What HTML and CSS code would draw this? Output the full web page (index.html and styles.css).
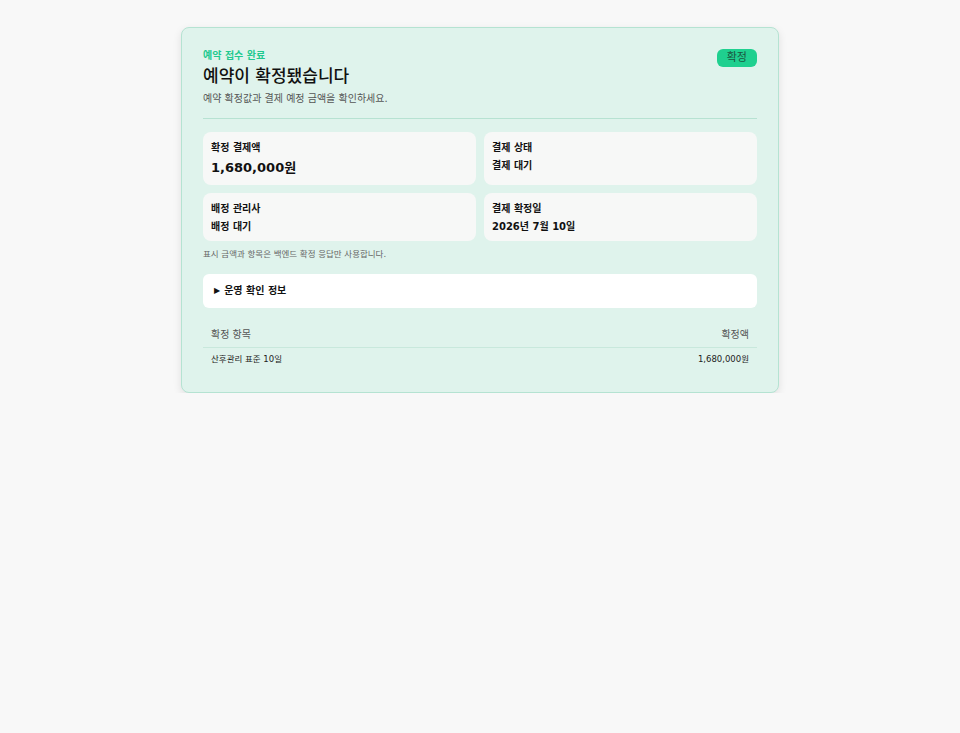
FILE: index.html
```html
<!DOCTYPE html>
<html lang="ko">
<head>
<meta charset="utf-8">
<link rel="stylesheet" href="styles.css">
</head>
<body>
<main class="card">
  <header class="head">
    <div class="head-text">
      <p class="eyebrow">예약 접수 완료</p>
      <h1 class="title">예약이 확정됐습니다</h1>
      <p class="sub">예약 확정값과 결제 예정 금액을 확인하세요.</p>
    </div>
    <span class="badge">확정</span>
  </header>
  <hr class="divider">
  <section class="grid">
    <div class="tile">
      <div class="label">확정 결제액</div>
      <div class="value big">1,680,000원</div>
    </div>
    <div class="tile">
      <div class="label">결제 상태</div>
      <div class="value">결제 대기</div>
    </div>
    <div class="tile">
      <div class="label">배정 관리사</div>
      <div class="value">배정 대기</div>
    </div>
    <div class="tile">
      <div class="label">결제 확정일</div>
      <div class="value">2026년 7월 10일</div>
    </div>
  </section>
  <p class="note">표시 금액과 항목은 백엔드 확정 응답만 사용합니다.</p>
  <details class="details">
    <summary class="summary">운영 확인 정보</summary>
  </details>
  <table class="table">
    <thead>
      <tr><th class="left">확정 항목</th><th class="right">확정액</th></tr>
    </thead>
    <tbody>
      <tr><td class="left">산후관리 표준 10일</td><td class="right">1,680,000원</td></tr>
    </tbody>
  </table>
</main>
</body>
</html>
```

FILE: styles.css
```css
* { box-sizing: border-box; }
html, body { margin: 0; padding: 0; }
body {
  background: #f8f8f8;
  font-family: "DejaVu Sans", "Noto Sans CJK KR", sans-serif;
  color: #111;
  padding-top: 27px;
}
.card {
  width: 598px;
  margin: 0 auto;
  background: #dff3ec;
  border: 1px solid #b5e3d2;
  border-radius: 8px;
  padding: 21px 21px 19px;
  box-shadow: 0 3px 8px rgba(0,0,0,0.10);
}
.head {
  display: flex;
  justify-content: space-between;
  align-items: flex-start;
}
.eyebrow {
  margin: 0;
  font-size: 10px;
  font-weight: bold;
  color: #20c98f;
  line-height: 14px;
}
.title {
  margin: 2px 0 0;
  font-size: 17px;
  font-weight: 500;
  line-height: 22px;
  color: #111;
}
.sub {
  margin: 5px 0 0;
  font-size: 10px;
  line-height: 14px;
  color: #555;
}
.badge {
  background: #1fd08f;
  color: #1b5540;
  font-size: 11px;
  line-height: 18px;
  padding: 0 10px;
  border-radius: 6px;
}
.divider {
  border: 0;
  border-top: 1px solid #b7e2d2;
  margin: 12px 0 13px;
}
.grid {
  display: grid;
  grid-template-columns: 1fr 1fr;
  grid-template-rows: 53px 48px;
  gap: 8px;
}
.tile {
  background: #f7f8f7;
  border-radius: 8px;
  padding: 9px 8px 0;
}
.label {
  font-size: 10px;
  font-weight: bold;
  line-height: 13px;
  color: #111;
}
.value {
  margin-top: 5px;
  font-size: 10px;
  font-weight: bold;
  line-height: 13px;
  color: #111;
}
.value.big {
  margin-top: 5px;
  font-size: 13px;
  line-height: 18px;
}
.note {
  margin: 7px 0 0;
  font-size: 8.5px;
  line-height: 12px;
  color: #666;
}
.details {
  margin-top: 14px;
  background: #fff;
  border-radius: 6px;
  padding: 10px 11px 11px;
  min-height: 34px;
}
.summary {
  list-style: none;
  font-size: 10px;
  font-weight: bold;
  line-height: 13px;
  cursor: pointer;
}
.summary::-webkit-details-marker { display: none; }
.summary::before {
  content: "▶";
  font-size: 8px;
  margin-right: 4px;
  vertical-align: 1px;
}
.table {
  width: 100%;
  border-collapse: collapse;
  margin-top: 17px;
}
.table th {
  font-size: 10px;
  font-weight: normal;
  color: #555;
  padding: 3px 8px 6px;
  line-height: 13px;
  border-bottom: 1px solid #c8e8dc;
}
.table td {
  font-size: 8.5px;
  color: #222;
  padding: 5px 8px 8px;
  line-height: 12px;
}
.left { text-align: left; }
.right { text-align: right; }
```
